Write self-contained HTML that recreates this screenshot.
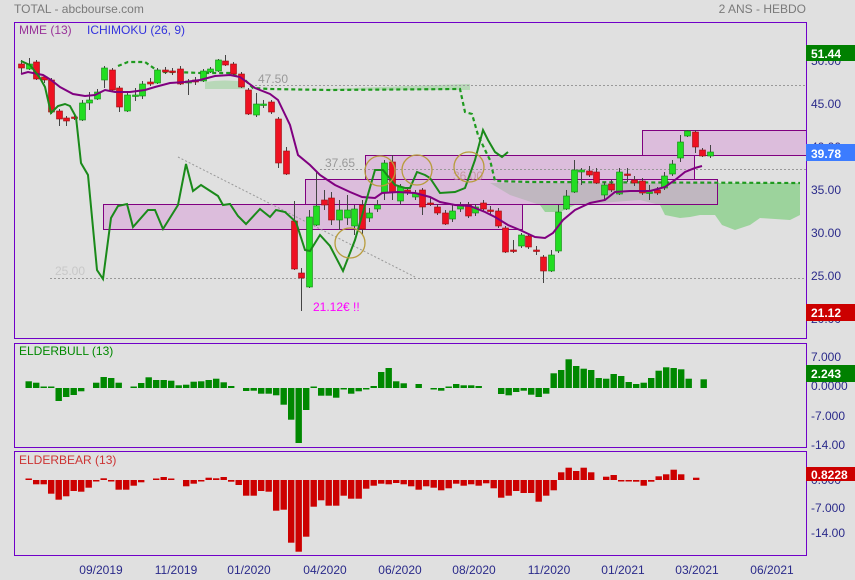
<!DOCTYPE html>
<html><head><meta charset="utf-8"><style>
html,body{margin:0;padding:0;background:#e0e0e0;width:855px;height:580px;overflow:hidden}
svg{display:block;font-family:"Liberation Sans",sans-serif}
</style></head><body>
<svg id="s" width="855" height="580" viewBox="0 0 855 580" xmlns="http://www.w3.org/2000/svg">
<rect width="855" height="580" fill="#e0e0e0"/>
<text x="14" y="13" font-size="12" fill="#7a7a7a">TOTAL - abcbourse.com</text>
<text x="806" y="13" font-size="12" fill="#7a7a7a" text-anchor="end">2 ANS - HEBDO</text>
<!-- cloud -->
<path d="M205,82 Q225,79 245,82 L245,89 L205,89Z M330,89 Q400,86 470,84 L470,90 L330,90Z" fill="#8fd08f" opacity="0.5"/>
<path d="M490,183 L800,183 L800,215 L790,220 L760,218 L750,225 L735,230 L722,225 L715,215 L700,215 L690,217 L680,218 L665,215 L660,205 L640,200 L575,205 L560,212 L545,212 L540,205 L510,195 Z" fill="#8fd08f" opacity="0.85"/>
<!-- boxes -->
<g fill="#d9a5d9" fill-opacity="0.6" stroke="#800080" stroke-width="1">
<rect x="103.5" y="204.5" width="419" height="25"/>
<rect x="305.5" y="179.5" width="412" height="25"/>
<rect x="365.5" y="155.5" width="329" height="24"/>
<rect x="642.5" y="130.5" width="164" height="25"/>
</g>
<line x1="365" y1="155.5" x2="806" y2="155.5" stroke="#800080"/>
<!-- dotted levels -->
<g stroke="#999" stroke-dasharray="2,2" stroke-width="1">
<line x1="255" y1="85.5" x2="806" y2="85.5"/>
<line x1="320" y1="169.5" x2="806" y2="169.5"/>
<line x1="50" y1="278.5" x2="806" y2="278.5"/>
<line x1="178" y1="157" x2="415" y2="277"/>
</g>
<text x="258" y="83" font-size="12" fill="#999">47.50</text>
<text x="325" y="167" font-size="12" fill="#999">37.65</text>
<text x="55" y="275" font-size="12" fill="#c8c8c8">25.00</text>
<text x="453" y="180" font-size="12" fill="#c09090" opacity="0.8">36.00</text>
<!-- dashed ichimoku -->
<polyline points="118,66 128,62 145,62 155,69 160,72 175,72 200,73 230,73 245,80 253,88 270,89 330,90 460,89 465,112 472,114 478,135 486,152 490,160 495,181 530,182 800,183" fill="none" stroke="#1f9a1f" stroke-width="2.2" stroke-dasharray="4,3"/>
<g id="candles"></g>
<!-- MME -->
<polyline points="21,74 28,72 43,75 51,80 60,87 73,94 85,96 95,95 105,90 115,92 130,92 145,90 155,87 170,83 185,82 200,80 215,76 230,75 240,77 255,88 270,94 278,100 290,125 298,155 310,165 320,175 335,185 350,192 362,197 375,198 382,193 398,192 415,193 430,197 440,202 455,205 470,206 485,212 495,217 508,225 520,230 535,237 545,238 553,233 563,220 575,210 590,203 605,200 615,192 630,191 650,191 665,187 675,180 685,172 695,168 702,166" fill="none" stroke="#800080" stroke-width="2"/>
<!-- chikou -->
<polyline points="21,61 30,65 40,78 45,87 51,113 58,106 65,104 70,106 76,117 81,163 88,175 97,270 103,279 111,218 118,206 127,204 133,227 148,210 155,210 163,229 178,205 186,164 193,191 201,185 218,196 223,205 230,204 238,216 246,224 260,209 270,217 276,210 285,212 296,222 305,250 310,251 320,235 330,246 343,271 355,240 365,205 375,170 383,170 395,185 405,188 410,188 417,172 425,175 430,178 440,193 455,192 465,188 475,160 483,130 488,140 495,152 502,157 508,152" fill="none" stroke="#1a8a1a" stroke-width="2"/>
<g fill="none" stroke="#b89c3c" stroke-width="1.3">
<circle cx="350" cy="243" r="15"/><circle cx="380" cy="171" r="15"/><circle cx="417" cy="170" r="15"/><circle cx="469" cy="167" r="15"/>
</g>
<text x="313" y="311" font-size="12" fill="#ff00ff">21.12€ !!</text>
<!-- panels -->
<g fill="none" stroke="#7000c8" stroke-width="1">
<rect x="14.5" y="22.5" width="792" height="316"/>
<rect x="14.5" y="343.5" width="792" height="104"/>
<rect x="14.5" y="451.5" width="792" height="104"/>
</g>
<text x="19" y="34" font-size="12" fill="#993399">MME (13)</text>
<text x="87" y="34" font-size="12" fill="#3333dd">ICHIMOKU (26, 9)</text>
<text x="19" y="355" font-size="12" fill="#008800">ELDERBULL (13)</text>
<text x="19" y="464" font-size="12" fill="#cc3333">ELDERBEAR (13)</text>
<g font-size="12" fill="#2a2a8a">
<text x="811" y="65">50.00</text><text x="811" y="108">45.00</text><text x="811" y="151">40.00</text>
<text x="811" y="194">35.00</text><text x="811" y="237">30.00</text><text x="811" y="280">25.00</text><text x="811" y="323">20.00</text>
<text x="811" y="361">7.000</text><text x="811" y="390">0.0000</text><text x="811" y="420">-7.000</text><text x="811" y="449">-14.00</text>
<text x="811" y="484">0.000</text><text x="811" y="512">-7.000</text><text x="811" y="537">-14.00</text>
<g text-anchor="middle">
<text x="101" y="574">09/2019</text><text x="176" y="574">11/2019</text><text x="249" y="574">01/2020</text><text x="325" y="574">04/2020</text><text x="400" y="574">06/2020</text><text x="474" y="574">08/2020</text><text x="549" y="574">11/2020</text><text x="623" y="574">01/2021</text><text x="697" y="574">03/2021</text><text x="772" y="574">06/2021</text>
</g></g>
<g font-size="12" font-weight="bold" fill="#fff">
<rect x="806" y="45" width="49" height="16" fill="#008000"/><text x="811" y="58">51.44</text>
<rect x="806" y="144" width="49" height="17" fill="#3c7cff"/><text x="811" y="158">39.78</text>
<rect x="806" y="304" width="49" height="17" fill="#cc0000"/><text x="811" y="317">21.12</text>
<rect x="806" y="365" width="49" height="17" fill="#008000"/><text x="811" y="378">2.243</text>
<rect x="806" y="467" width="49" height="14" fill="#cc0000"/><text x="811" y="479">0.8228</text>
</g>
<g id="bull" fill="#008800"></g>
<g id="bear" fill="#cc0000"></g>
</svg>
<script>
var NS="http://www.w3.org/2000/svg";
function X(i){return 21+i*7.57;}
function BX(i){return 28.5+i*7.5;}
function el(p,t,a){var e=document.createElementNS(NS,t);for(var k in a)e.setAttribute(k,a[k]);p.appendChild(e);return e;}
var bull=[6.7,5.3,1.3,1.3,-13,-9,-7,-3.3,0,5.3,11,10,5.3,0,0.7,5,10.7,8,8,7.3,2.7,3.3,6.3,6.7,8,9.3,5.7,2,0,-3,-2.7,-5.7,-5.7,-7.3,-16.7,-31.7,-55,-22,0.7,-7.7,-7.7,-9.7,-0.7,-5.7,-3.3,-1.3,2,16,20,6.7,4.7,0,4,0,-1.3,-2.7,1.3,4,2.7,2.7,2,0,0,-6,-7.3,-4,-2.7,-6.7,-9,-5.7,14.7,18,28.7,22,19.3,18,10,9.3,14,12,6,4,5.3,10,17.3,20.7,20,18.7,9.3,0,8.7];
var bear=[0.7,-4.3,-4.3,-13.7,-19.7,-16.3,-11,-11.7,-7.7,-1,1.7,-1,-9.7,-9.7,-5.7,-2.3,0,0.3,3,0.3,0,-6.3,-3.7,-0.3,2.3,1.7,3,-1.7,-5,-15.7,-15.7,-11,-11.7,-30.7,-29.7,-62.7,-71.7,-56.7,-26.7,-20.3,-25.7,-25.7,-15.7,-18.7,-18.7,-8.7,-5.7,-3.7,-4.3,-3,-4.3,-6.3,-9.7,-6.3,-7.7,-10.3,-8.3,-3.7,-5.7,-4.3,-5.7,-3.3,-8.3,-17.7,-15.7,-11,-13,-13,-21.7,-15.7,-10.3,7.7,12.3,9,12.3,7.7,0,3.3,5,-0.3,-0.3,-1.7,-5.7,-1.7,3.7,5.7,10.3,5.7,0,2.3];
function bars(g,arr,z){var gg=document.getElementById(g);arr.forEach(function(v,i){if(v===0)return;var h=Math.max(Math.abs(v),1.5);el(gg,"rect",{x:BX(i)-3,y:v>0?z-h:z,width:6.4,height:h});});}
bars("bull",bull,388);bars("bear",bear,480);
var c=[["r",64,68,60,73],["g",64,69,58,70],["r",62,79,60,80],["r",77,80,75,83],["r",80,112,78,114],["r",111,119,109,126],["r",118,121,116,126],["r",117,118,114,120],["g",103,120,100,121],["g",100,103,92,110],["g",92,99,89,100],["g",68,80,66,88],["r",70,90,68,91],["r",88,107,86,112],["g",95,111,93,112],["g",95,96,88,101],["g",84,96,81,99],["r",82,84,78,86],["g",70,83,68,84],["r",70,72,67,74],["r",71,72,68,75],["r",69,84,66,85],["g",81,83,79,95],["r",80,82,77,85],["g",71,81,69,82],["g",69,72,67,73],["g",60,71,59,72],["r",61,65,55,66],["r",64,74,62,75],["r",74,87,72,88],["r",90,114,88,115],["g",104,115,93,117],["g",104,105,100,108],["r",102,112,100,114],["r",119,163,117,168],["r",151,174,147,175],["r",221,269,201,270],["r",273,278,268,311],["g",217,287,210,288],["g",206,225,171,226],["r",200,205,190,210],["r",198,220,192,225],["g",210,220,200,230],["g",210,218,195,225],["g",209,226,205,235],["r",205,229,200,235],["g",213,218,208,222],["g",205,209,200,212],["g",163,193,160,200],["r",162,192,155,200],["g",187,201,184,205],["r",190,193,188,195],["g",193,197,190,200],["r",190,207,188,215],["r",203,204,198,206],["r",207,213,204,215],["r",213,224,210,225],["g",211,219,205,222],["g",205,209,202,212],["r",205,216,202,218],["g",207,213,204,216],["r",203,209,200,212],["r",210,211,206,214],["r",211,226,208,228],["r",228,252,226,253],["r",250,251,240,253],["g",235,246,233,248],["r",236,247,234,249],["r",250,251,246,255],["r",257,271,255,283],["g",255,271,250,272],["g",212,251,205,253],["g",196,209,190,210],["g",170,192,160,193],["g",170,172,168,185],["r",171,175,166,177],["r",172,183,168,184],["g",185,195,182,200],["r",184,190,180,192],["g",172,194,168,195],["r",174,175,168,182],["r",180,183,176,186],["r",181,193,178,195],["g",192,193,185,200],["r",190,193,187,195],["g",176,188,172,190],["g",164,174,160,176],["g",142,158,135,162],["g",131,136,130,137],["r",132,147,130,153],["r",150,156,148,157],["g",152,156,145,158]];
var cg=document.getElementById("candles");
c.forEach(function(d,i){var x=Math.round(X(i))+0.5;el(cg,"line",{x1:x,x2:x,y1:d[3],y2:d[4],stroke:"#444","stroke-width":1});var h=Math.max(d[2]-d[1],1.5);el(cg,"rect",{x:x-3,y:d[1],width:6,height:h,fill:d[0]=="g"?"#22dd22":"#ee1122",stroke:d[0]=="g"?"#118811":"#991111","stroke-width":0.6});});
</script>
</body></html>
